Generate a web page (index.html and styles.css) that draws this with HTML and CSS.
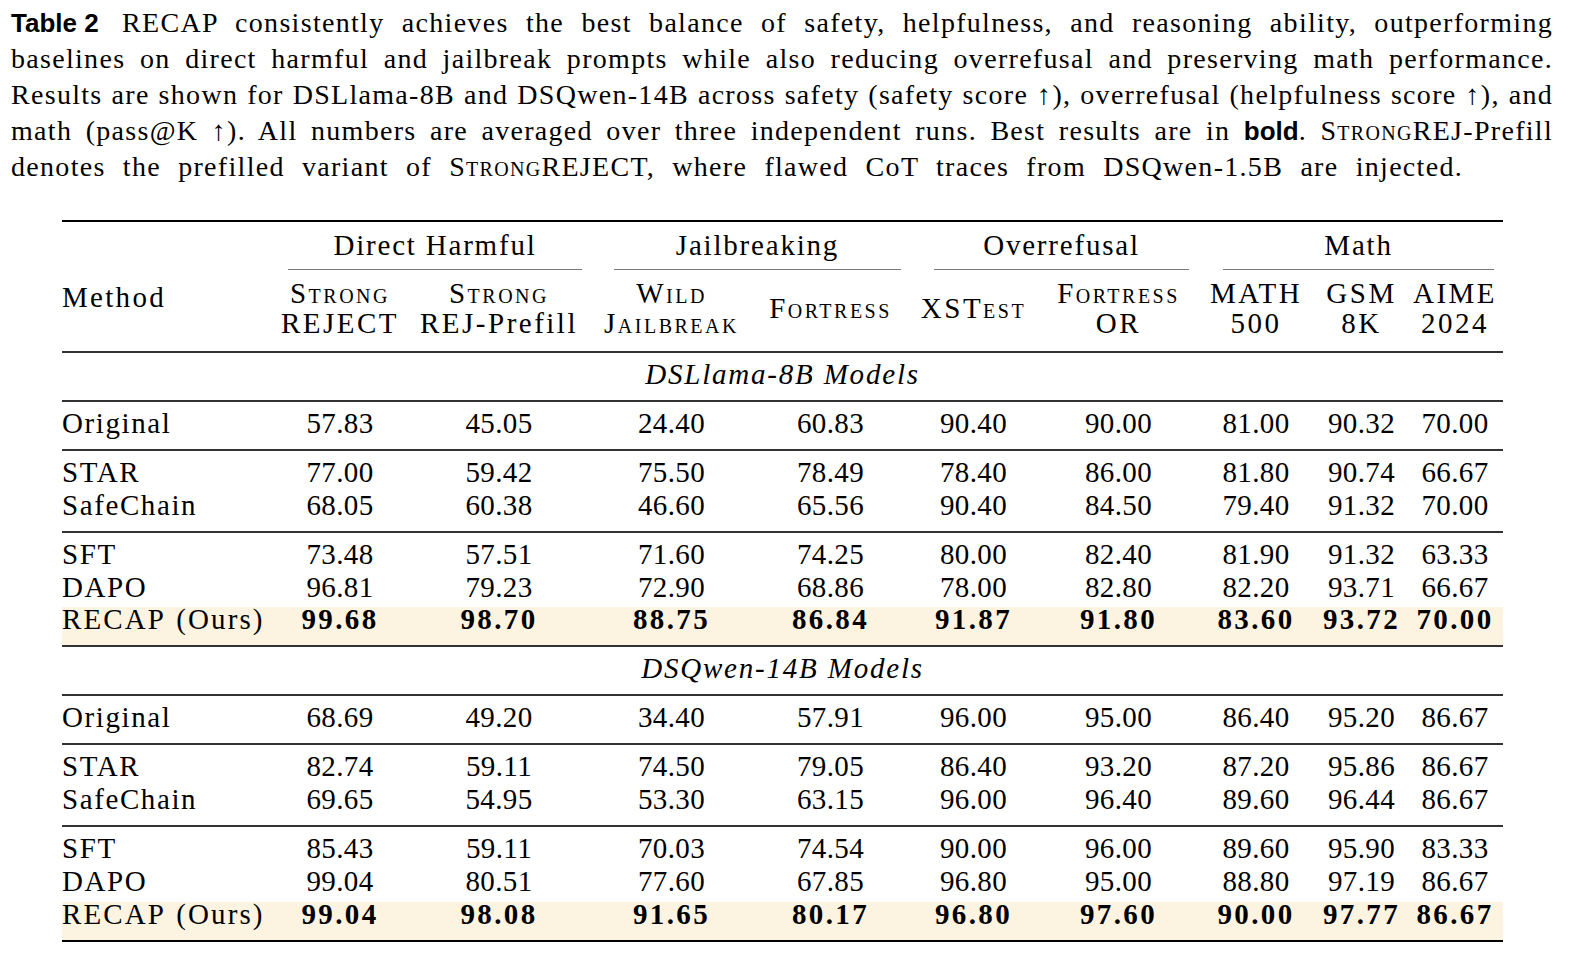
FILE: index.html
```html
<!DOCTYPE html>
<html lang="en">
<head>
<meta charset="utf-8">
<title>Table 2</title>
<link rel="stylesheet" href="styles.css">
</head>
<body>
<div class="page">
  <p class="caption">
    <span class="line"><b class="label">Table 2</b> RECAP consistently achieves the best balance of safety, helpfulness, and reasoning ability, outperforming</span>
    <span class="line">baselines on direct harmful and jailbreak prompts while also reducing overrefusal and preserving math performance.</span>
    <span class="line">Results are shown for DSLlama-8B and DSQwen-14B across safety (safety score ↑), overrefusal (helpfulness score ↑), and</span>
    <span class="line">math (pass@K ↑). All numbers are averaged over three independent runs. Best results are in <b class="sans">bold</b>. <span class="sc">Strong</span>REJ-Prefill</span>
    <span class="line last">denotes the prefilled variant of <span class="sc">Strong</span>REJECT, where flawed CoT traces from DSQwen-1.5B are injected.</span>
  </p>

  <div class="table-wrap">
    <table class="results">
      <colgroup>
        <col class="c-method">
        <col class="c1"><col class="c2"><col class="c3"><col class="c4">
        <col class="c5"><col class="c6"><col class="c7"><col class="c8"><col class="c9">
      </colgroup>
      <thead>
        <tr class="groups">
          <th></th>
          <th colspan="2"><span class="cmid g-dh">Direct Harmful</span></th>
          <th colspan="2"><span class="cmid g-jb">Jailbreaking</span></th>
          <th colspan="2"><span class="cmid g-or">Overrefusal</span></th>
          <th colspan="3"><span class="cmid g-math">Math</span></th>
        </tr>
        <tr class="cols">
          <th class="method">Method</th>
          <th class="hc"><span class="sc">Strong</span><br>REJECT</th>
          <th class="hc"><span class="sc">Strong</span><br>REJ-Prefill</th>
          <th class="hc"><span class="sc">Wild</span><br><span class="sc">Jailbreak</span></th>
          <th class="hc"><span class="sc">Fortress</span></th>
          <th class="hc">XST<span class="sc">est</span></th>
          <th class="hc"><span class="sc">Fortress</span><br>OR</th>
          <th class="hc">MATH<br>500</th>
          <th class="hc">GSM<br>8K</th>
          <th class="hc">AIME<br>2024</th>
        </tr>
      </thead>

      <tbody class="sub">
        <tr><td colspan="10">DSLlama-8B Models</td></tr>
      </tbody>
      <tbody>
        <tr><td class="m">Original</td><td>57.83</td><td>45.05</td><td>24.40</td><td>60.83</td><td>90.40</td><td>90.00</td><td>81.00</td><td>90.32</td><td>70.00</td></tr>
      </tbody>
      <tbody>
        <tr><td class="m">STAR</td><td>77.00</td><td>59.42</td><td>75.50</td><td>78.49</td><td>78.40</td><td>86.00</td><td>81.80</td><td>90.74</td><td>66.67</td></tr>
        <tr><td class="m">SafeChain</td><td>68.05</td><td>60.38</td><td>46.60</td><td>65.56</td><td>90.40</td><td>84.50</td><td>79.40</td><td>91.32</td><td>70.00</td></tr>
      </tbody>
      <tbody>
        <tr><td class="m">SFT</td><td>73.48</td><td>57.51</td><td>71.60</td><td>74.25</td><td>80.00</td><td>82.40</td><td>81.90</td><td>91.32</td><td>63.33</td></tr>
        <tr><td class="m">DAPO</td><td>96.81</td><td>79.23</td><td>72.90</td><td>68.86</td><td>78.00</td><td>82.80</td><td>82.20</td><td>93.71</td><td>66.67</td></tr>
        <tr class="best"><td class="m">RECAP (Ours)</td><td>99.68</td><td>98.70</td><td>88.75</td><td>86.84</td><td>91.87</td><td>91.80</td><td>83.60</td><td>93.72</td><td>70.00</td></tr>
      </tbody>

      <tbody class="sub">
        <tr><td colspan="10">DSQwen-14B Models</td></tr>
      </tbody>
      <tbody>
        <tr><td class="m">Original</td><td>68.69</td><td>49.20</td><td>34.40</td><td>57.91</td><td>96.00</td><td>95.00</td><td>86.40</td><td>95.20</td><td>86.67</td></tr>
      </tbody>
      <tbody>
        <tr><td class="m">STAR</td><td>82.74</td><td>59.11</td><td>74.50</td><td>79.05</td><td>86.40</td><td>93.20</td><td>87.20</td><td>95.86</td><td>86.67</td></tr>
        <tr><td class="m">SafeChain</td><td>69.65</td><td>54.95</td><td>53.30</td><td>63.15</td><td>96.00</td><td>96.40</td><td>89.60</td><td>96.44</td><td>86.67</td></tr>
      </tbody>
      <tbody>
        <tr><td class="m">SFT</td><td>85.43</td><td>59.11</td><td>70.03</td><td>74.54</td><td>90.00</td><td>96.00</td><td>89.60</td><td>95.90</td><td>83.33</td></tr>
        <tr><td class="m">DAPO</td><td>99.04</td><td>80.51</td><td>77.60</td><td>67.85</td><td>96.80</td><td>95.00</td><td>88.80</td><td>97.19</td><td>86.67</td></tr>
        <tr class="best"><td class="m">RECAP (Ours)</td><td>99.04</td><td>98.08</td><td>91.65</td><td>80.17</td><td>96.80</td><td>97.60</td><td>90.00</td><td>97.77</td><td>86.67</td></tr>
      </tbody>
    </table>
  </div>
</div>
</body>
</html>
```

FILE: styles.css
```css
* { box-sizing: border-box; }

html, body {
  margin: 0;
  background: #ffffff;
  color: #000000;
}

body {
  font-family: "Liberation Serif", "Times New Roman", "DejaVu Serif", serif;
}

.page {
  padding-top: 5px;
}

/* ---------- caption ---------- */
.caption {
  margin: 0 0 0 11px;
  width: 1542px;
  font-size: 28px;
  line-height: 36px;
  letter-spacing: 1.3px;
}

.caption .line {
  display: block;
  text-align: justify;
  text-align-last: justify;
}

.caption .line.last {
  width: 1452px;
}

.label,
.sans {
  font-family: "Liberation Sans", Arial, sans-serif;
  font-weight: 700;
  letter-spacing: 0;
  font-size: 26px;
}

.label {
  display: inline-block;
  white-space: nowrap;
  margin-right: 6px;
}

.sc {
  font-variant: small-caps;
}

/* ---------- table ---------- */
.table-wrap {
  padding: 35px 0 0 62px;
}

.results {
  border-collapse: collapse;
  table-layout: fixed;
  width: 1441px;
  font-size: 29px;
  letter-spacing: 0.5px;
  border-top: 2px solid #000;
  border-bottom: 2px solid #000;
}

.c-method { width: 208px; }
.c1 { width: 140px; }
.c2 { width: 178px; }
.c3 { width: 167px; }
.c4 { width: 151px; }
.c5 { width: 135px; }
.c6 { width: 155px; }
.c7 { width: 120px; }
.c8 { width: 91px; }
.c9 { width: 96px; }

.results th,
.results td {
  padding: 0;
  font-weight: normal;
  text-align: center;
  white-space: nowrap;
}

/* group header row with cmidrules */
.groups th {
  padding-top: 8px;
  line-height: 30px;
  vertical-align: bottom;
}

.cmid {
  display: block;
  padding-bottom: 9px;
  border-bottom: 1px solid #7a7a7a;
  letter-spacing: 1.8px;
}

.g-dh { margin: 0 6px 0 18px; }
.g-jb { margin: 0 5px 0 26px; }
.g-or { margin: 0 7px 0 28px; }
.g-math { margin: 0 9px 0 27px; }

/* column header row */
.cols th {
  padding: 8px 0 13px;
  line-height: 30px;
  vertical-align: middle;
}

.cols th.method {
  text-align: left;
  vertical-align: top;
  padding-top: 12px;
  letter-spacing: 2.3px;
}

.cols th.hc {
  letter-spacing: 2.5px;
}

/* body */
.results tbody {
  border-top: 2px solid #333;
}

.results td {
  line-height: 32.9px;
  letter-spacing: 0.4px;
}

.results tbody tr:first-child td {
  padding-top: 5px;
}

.results tbody tr:last-child td {
  padding-bottom: 9px;
}

.results tbody.sub td {
  padding: 6px 0 10px;
  font-style: italic;
  letter-spacing: 1.8px;
}

.results td.m {
  text-align: left;
  letter-spacing: 1.6px;
}

.results tr.best td.m {
  letter-spacing: 2.1px;
  word-spacing: 2px;
}

.results tr.best td {
  background: linear-gradient(to bottom, #ffffff 0, #ffffff 4px, #fdf3e1 4px);
}

.results tr.best td:not(.m) {
  font-weight: 700;
  letter-spacing: 2.4px;
}
```
